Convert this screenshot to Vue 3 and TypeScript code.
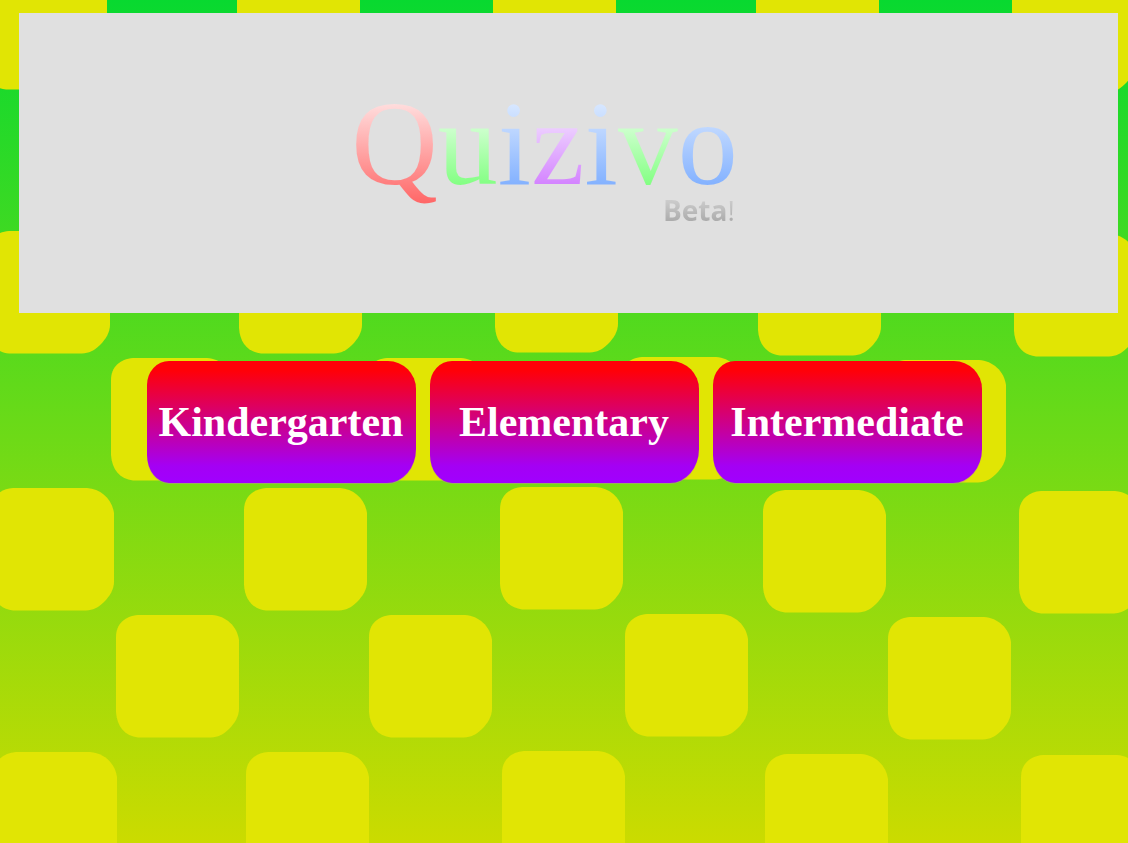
<script setup lang="ts">
interface Letter {
  char: string
  tone: string
}

const letters: Letter[] = [
  { char: 'Q', tone: 'red' },
  { char: 'u', tone: 'green' },
  { char: 'i', tone: 'blue' },
  { char: 'z', tone: 'purple' },
  { char: 'i', tone: 'blue' },
  { char: 'v', tone: 'green' },
  { char: 'o', tone: 'blue' },
]

const levels: string[] = ['Kindergarten', 'Elementary', 'Intermediate']

// Top-left corners of the checkerboard tiles
const tiles: [number, number][] = [
  [-16, -33], [237, -33], [493, -34], [756, -31], [1012, -30],
  [-13, 231], [239, 231], [495, 230], [758, 233], [1014, 234],
  [111, 358], [365, 358], [620, 357], [883, 360],
  [-9, 488], [244, 488], [500, 487], [763, 490], [1019, 491],
  [116, 615], [369, 615], [625, 614], [888, 617],
  [-6, 752], [246, 752], [502, 751], [765, 754], [1021, 755],
]
</script>

<template>
  <div class="page">
    <svg class="backdrop" viewBox="0 0 1128 843" preserveAspectRatio="xMidYMin slice" aria-hidden="true">
      <defs>
        <path
          id="tile"
          d="M22 0H96C110 1 121 11 123 25V94C123 101 119 108 113 114C107 120 102 122 95 122.500H22C9 121 1 112 0 97V22C0 9 9 1 22 0Z"
        />
      </defs>
      <use v-for="([x, y], i) in tiles" :key="i" href="#tile" :x="x" :y="y" fill="#e1e504" />
    </svg>

    <header class="banner">
      <div class="logo">
        <h1 class="name" aria-label="Quizivo">
          <span v-for="(l, i) in letters" :key="i" class="letter" :class="l.tone">{{ l.char }}</span>
        </h1>
        <p class="beta">Beta<span class="mark">!</span></p>
      </div>
    </header>

    <nav class="levels" aria-label="Level">
      <button v-for="level in levels" :key="level" type="button" class="level">{{ level }}</button>
    </nav>
  </div>
</template>

<style>
body {
  margin: 0;
}
</style>

<style scoped>
.page {
  position: relative;
  box-sizing: border-box;
  min-height: 100vh;
  padding-top: 13px;
  overflow: hidden;
  background: linear-gradient(#08d930, #cbdb00);
}

.backdrop {
  position: absolute;
  inset: 0;
  width: 100%;
  height: 100%;
}

.banner {
  position: relative;
  box-sizing: border-box;
  display: flex;
  justify-content: center;
  min-height: 300px;
  margin: 0 10px 0 19px;
  padding: 69px 48px 0 0;
  background: #e0e0e0;
}

.logo {
  display: flex;
  flex-direction: column;
}

.name {
  display: flex;
  margin: 0;
  font: 400 120px/124px "Liberation Serif", "Times New Roman", serif;
}

.letter {
  color: transparent;
  background-clip: text;
  -webkit-background-clip: text;
}

.red {
  background-image: linear-gradient(#ffdede 21px, #ff6464 124px);
}

.green {
  background-image: linear-gradient(#ccffcc 47px, #84ff84 102px);
}

.blue {
  background-image: linear-gradient(#dceaff 18px, #84b2ff 102px);
}

.purple {
  background-image: linear-gradient(#ecccff 47px, #d484ff 102px);
}

.beta {
  align-self: flex-end;
  margin: -10px 3px 0 0;
  font: 700 28px/28px "Open Sans", "Noto Sans", sans-serif;
  color: transparent;
  background: linear-gradient(#cccccc 4px, #acacac 25px);
  background-clip: text;
  -webkit-background-clip: text;
}

.mark {
  font-weight: 400;
}

.levels {
  position: relative;
  display: flex;
  flex-wrap: wrap;
  justify-content: center;
  gap: 14px;
  padding: 48px 10px;
}

.level {
  width: 269px;
  height: 122px;
  padding: 0;
  border: 0;
  border-radius: 22px 28px 29px 22px / 24px 28px 34px 28px;
  background: linear-gradient(#ff0008 8%, #a400f4 86%, #a000ff);
  box-shadow: 0 1px 0 rgba(176, 150, 140, 0.6);
  color: #fff;
  font: 700 42px/48px "Liberation Serif", Cambria, serif;
  cursor: pointer;
}
</style>
